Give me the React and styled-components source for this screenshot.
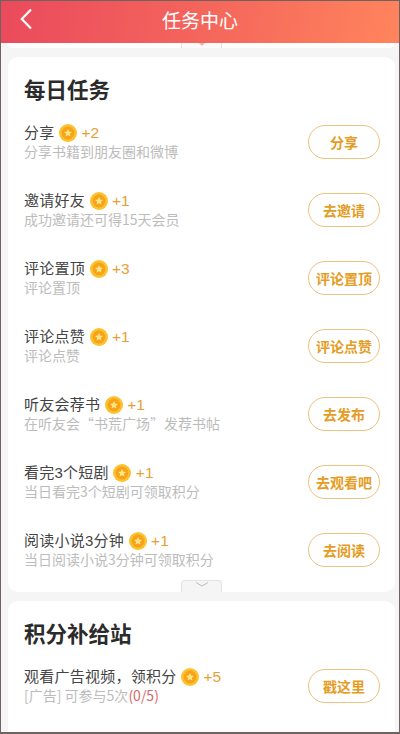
import React from 'react';
import styled, { createGlobalStyle } from 'styled-components';

const GlobalStyle = createGlobalStyle`
  html, body { margin: 0; padding: 0; background: #f5f5f5; }
  body { font-family: "Noto Sans CJK SC", "Liberation Sans", sans-serif; }
`;

const dailyTasks = [
  { title: '分享', points: 2, desc: '分享书籍到朋友圈和微博', action: '分享' },
  { title: '邀请好友', points: 1, desc: '成功邀请还可得15天会员', action: '去邀请' },
  { title: '评论置顶', points: 3, desc: '评论置顶', action: '评论置顶' },
  { title: '评论点赞', points: 1, desc: '评论点赞', action: '评论点赞' },
  { title: '听友会荐书', points: 1, desc: '在听友会“书荒广场”发荐书帖', action: '去发布' },
  { title: '看完3个短剧', points: 1, desc: '当日看完3个短剧可领取积分', action: '去观看吧' },
  { title: '阅读小说3分钟', points: 1, desc: '当日阅读小说3分钟可领取积分', action: '去阅读' },
];

const Page = styled.div`
  width: 400px;
  height: 734px;
  box-sizing: border-box;
  border: 1px solid #6e6360;
  border-width: 1px 1px 2px 1px;
  background: #f5f5f5;
  overflow: hidden;
  display: flex;
  flex-direction: column;
`;

const Header = styled.header`
  flex: none;
  height: 42px;
  box-sizing: border-box;
  padding-bottom: 4px;
  position: relative;
  display: flex;
  align-items: center;
  justify-content: center;
  background: linear-gradient(100deg, #ea4a5c 0%, #f4655c 50%, #ff845c 100%);
  color: #fff;
  font-size: 19px;
  line-height: 24px;
`;

const BackButton = styled.span`
  position: absolute;
  left: 18px;
  top: 7px;
  display: flex;
`;

const Scroll = styled.main`
  flex: 1;
  padding: 0 4px 0 7px;
  display: flex;
  flex-direction: column;
`;

const CardTail = styled.div`
  flex: none;
  position: relative;
  height: 5px;
  margin-bottom: 9px;
  background: #fff;
  border-radius: 0 0 10px 10px;
`;

const Card = styled.section`
  position: relative;
  flex: none;
  background: #fff;
  border-radius: 10px;
  padding: 18px 15px 0 16px;
  height: ${(p) => p.$height}px;
  box-sizing: border-box;
  margin-bottom: ${(p) => p.$gap || 0}px;
`;

const TopHandle = styled.div`
  position: absolute;
  left: 173px;
  top: 0;
  width: 41px;
  height: 5px;
  box-sizing: border-box;
  background: #fbfbfb;
  border: 1px solid #e2e2e2;
  border-width: 0 1px;
  display: flex;
  justify-content: center;
`;

const BottomHandle = styled.div`
  position: absolute;
  left: 173px;
  bottom: 0;
  width: 41px;
  height: 12px;
  box-sizing: border-box;
  background: #f5f5f5;
  border: 1px solid #e2e2e2;
  border-bottom: none;
  border-radius: 4px 4px 0 0;
  display: flex;
  justify-content: center;
`;

const CardTitle = styled.h2`
  margin: 0 0 19px;
  font-size: 21.5px;
  line-height: 28px;
  font-weight: 700;
  color: #2b2b2b;
`;

const Row = styled.div`
  height: 68px;
  display: flex;
  align-items: flex-start;
  justify-content: space-between;
`;

const Info = styled.div`
  display: flex;
  flex-direction: column;
  padding-top: 1px;
`;

const TitleLine = styled.div`
  display: flex;
  align-items: center;
  gap: 4.500px;
  height: 19px;
  font-family: "Liberation Sans", "Noto Sans CJK SC", sans-serif;
  font-size: 15px;
  letter-spacing: 0.25px;
  line-height: 19px;
  color: #444;
`;

const Points = styled.span`
  font-size: 15.500px;
  letter-spacing: 0;
  color: #e5a033;
`;

const Desc = styled.div`
  font-size: 14px;
  line-height: 18px;
  color: #bcbcbc;
`;

const Quota = styled.span`
  color: #d9666a;
`;

const ActionButton = styled.button`
  flex: none;
  width: 72px;
  height: 34px;
  margin-top: 3px;
  padding: 0;
  box-sizing: border-box;
  background: #fff;
  border: 1.5px solid #ecc27e;
  border-radius: 17px;
  color: #e59c24;
  font-family: inherit;
  font-size: 14px;
  line-height: 20px;
  font-weight: 700;
`;

const Coin = () => (
  <svg width="18" height="18" viewBox="0 0 18 18">
    <circle cx="9" cy="9" r="9" fill="#fcc22e" />
    <circle cx="9" cy="9" r="6.4" fill="#f7a21b" />
    <path
      d="M9 5l1.200 2.600 2.800.3-2.100 1.900.6 2.800L9 11.200l-2.500 1.400.6-2.800L5 7.900l2.800-.3z"
      fill="#ffe680"
    />
  </svg>
);

const Chevron = () => (
  <svg width="16" height="8" viewBox="0 0 16 8">
    <path d="M2 1.500l6 3.500 6-3.500" fill="none" stroke="#bdbdbd" strokeWidth="1" />
  </svg>
);

const ChevronTip = () => (
  <svg width="6" height="3" viewBox="0 0 6 3">
    <path d="M0 0h6L3 3z" fill="#f0b4b0" />
  </svg>
);

const TaskRow = ({ title, points, desc, action }) => (
  <Row>
    <Info>
      <TitleLine>
        {title}
        <Coin />
        <Points>+{points}</Points>
      </TitleLine>
      <Desc>{desc}</Desc>
    </Info>
    <ActionButton>{action}</ActionButton>
  </Row>
);

const App = () => (
  <Page>
    <GlobalStyle />
    <Header>
      <BackButton>
        <svg width="14" height="22" viewBox="0 0 14 22">
          <path d="M12 1.500L2.800 11l9.200 9.500" fill="none" stroke="#fff" strokeWidth="2.200" />
        </svg>
      </BackButton>
      任务中心
    </Header>
    <Scroll>
      <CardTail>
        <TopHandle>
          <ChevronTip />
        </TopHandle>
      </CardTail>
      <Card $height={535} $gap={9}>
        <CardTitle>每日任务</CardTitle>
        {dailyTasks.map((task) => (
          <TaskRow key={task.title} {...task} />
        ))}
        <BottomHandle>
          <Chevron />
        </BottomHandle>
      </Card>
      <Card $height={140}>
        <CardTitle>积分补给站</CardTitle>
        <Row>
          <Info>
            <TitleLine>
              观看广告视频，领积分
              <Coin />
              <Points>+5</Points>
            </TitleLine>
            <Desc>
              [广告] 可参与5次<Quota>(0/5)</Quota>
            </Desc>
          </Info>
          <ActionButton>戳这里</ActionButton>
        </Row>
      </Card>
    </Scroll>
  </Page>
);

export default App;
